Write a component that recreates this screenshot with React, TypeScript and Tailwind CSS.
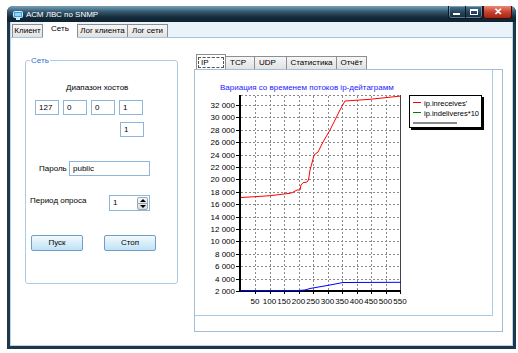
import React from "react";

const yOf = (v: number) => 291 - ((v - 2000) / 2000) * 12.4;
const xOf = (k: number) => 240.5 + k * 14.5;

const red: [number, number][] = [
  [241, 197.5], [255, 196.7], [270, 195.7], [290, 193.3], [292, 192.7], [297, 190], [300, 190],
  [301, 185], [303, 182.7], [307, 182], [308.5, 180], [310, 170], [312, 163], [314, 155],
  [318, 152], [323, 142], [330, 130], [340, 110], [345, 101], [370, 99.3], [401, 96],
];
const blue: [number, number][] = [
  [241, 290.5], [298, 290.5], [305, 290], [310, 288.5], [330, 285], [343, 282.5], [401, 282.3],
];

function Chart() {
  const yVals = Array.from({ length: 16 }, (_, i) => 2000 + i * 2000);
  const xs = Array.from({ length: 11 }, (_, i) => i + 1);
  const fmt = (v: number) => {
    const s = String(v);
    return s.length > 3 ? s.slice(0, s.length - 3) + " " + s.slice(-3) : s;
  };
  return (
    <svg width={297} height={245} viewBox="195 70 297 245" className="block">
      <text x={220} y={90} fontSize="8px" fill="#1a1aff" fontFamily="Liberation Sans, Arial, sans-serif">
        Вариация со временем потоков ip-дейтаграмм
      </text>
      {/* horizontal grid */}
      {yVals.slice(1).map((v) => {
        const y = Math.round(yOf(v)) + 0.5;
        return <line key={"h" + v} x1={241} x2={400} y1={y} y2={y} stroke="#8a8a8a" strokeDasharray="2 2" />;
      })}
      <line x1={241} x2={401} y1={95.5} y2={95.5} stroke="#8a8a8a" strokeDasharray="2 2" />
      {/* vertical grid */}
      {xs.slice(0, 10).map((k) => {
        const x = Math.round(xOf(k)) + 0.5;
        return <line key={"v" + k} x1={x} x2={x} y1={96} y2={290} stroke="#8a8a8a" strokeDasharray="2 2" />;
      })}
      <line x1={400.5} x2={400.5} y1={95} y2={292} stroke="#444" />
      {/* ticks */}
      {yVals.map((v) => {
        const y = Math.round(yOf(v)) + 0.5;
        return <line key={"yt" + v} x1={236} x2={240} y1={y} y2={y} stroke="#000" />;
      })}
      {xs.map((k) => {
        const x = Math.round(xOf(k)) + 0.5;
        return <line key={"xt" + k} x1={x} x2={x} y1={291} y2={294} stroke="#000" />;
      })}
      {/* axes */}
      <line x1={240} x2={240} y1={95} y2={292} stroke="#000" strokeWidth={2} />
      <line x1={239} x2={401} y1={291} y2={291} stroke="#000" strokeWidth={2} />
      {/* labels */}
      {yVals.map((v) => (
        <text key={"yl" + v} x={235} y={Math.round(yOf(v)) + 3} fontSize="8px" textAnchor="end" fill="#000" fontFamily="Liberation Sans, Arial, sans-serif">
          {fmt(v)}
        </text>
      ))}
      {xs.map((k) => (
        <text key={"xl" + k} x={xOf(k)} y={303.5} fontSize="8px" textAnchor="middle" fill="#000" fontFamily="Liberation Sans, Arial, sans-serif">
          {k * 50}
        </text>
      ))}
      {/* series */}
      <polyline points={blue.map((p) => p.join(",")).join(" ")} fill="none" stroke="#0000ff" strokeWidth={1} />
      <polyline points={red.map((p) => p.join(",")).join(" ")} fill="none" stroke="#ff0000" strokeWidth={1} />
      {/* legend */}
      <rect x={411} y={97} width={73} height={33} fill="#000" />
      <rect x={409.5} y={95.5} width={72} height={32} fill="#fff" stroke="#000" />
      <line x1={413} x2={421} y1={102.5} y2={102.5} stroke="#ff0000" />
      <text x={424} y={105.5} fontSize="7.5px" fill="#000" fontFamily="Liberation Sans, Arial, sans-serif">ip.inreceives'</text>
      <line x1={413} x2={421} y1={112.5} y2={112.5} stroke="#008000" />
      <text x={424} y={115.5} fontSize="7.5px" fill="#000" fontFamily="Liberation Sans, Arial, sans-serif">ip.indeliveres*10</text>
      <line x1={413} x2={457} y1={123} y2={123} stroke="#8a8a8a" strokeWidth={2} />
    </svg>
  );
}

function Box({ w, v, className = "" }: { w: number; v: string; className?: string }) {
  return (
    <div
      className={"h-[15px] border border-[#8fb6d9] bg-white pl-[3px] flex items-center " + className}
      style={{ width: w }}
    >
      {v}
    </div>
  );
}

function Btn({ label }: { label: string }) {
  return (
    <div className="w-[52px] h-[16px] rounded-[2px] border border-[#6f9fc6] bg-[linear-gradient(#f2f9fd,#d9eefa_50%,#bfe1f5)] flex items-center justify-center">
      {label}
    </div>
  );
}

export default function App() {
  return (
    <div className="w-[518px] h-[353px] bg-white overflow-hidden font-['Liberation_Sans',Arial,sans-serif] text-[8px] leading-[10px] text-black">
      <div className="ml-[7px] mt-[6px] w-[509px] h-[343px] flex flex-col rounded-t-[6px] bg-[#1d3848] px-[3px] pb-[3px]">
        {/* title bar */}
        <div className="h-[16px] -mx-[3px] pl-[6px] pr-[4px] flex items-start rounded-t-[6px] bg-[linear-gradient(#7aa3bb,#35596f_35%,#142b3a_70%,#0e2230)]">
          <div className="mt-[5px] w-[10px] h-[9px] flex items-center justify-center">
            <svg width="10" height="9" viewBox="0 0 10 9">
              <rect x="0.5" y="0.5" width="9" height="6" rx="1" fill="#3ba0d8" stroke="#cde9f8" />
              <rect x="2" y="2" width="6" height="3" fill="#8fd4f7" />
              <rect x="3" y="7" width="4" height="2" fill="#cde9f8" />
            </svg>
          </div>
          <div className="ml-[3px] mt-[4px] text-white text-[8px] leading-[10px]">АСМ ЛВС по SNMP</div>
          <div className="ml-auto flex">
            <div className="w-[35px] h-[13px] flex rounded-b-[3px] border border-t-0 border-[#0b1821] bg-[linear-gradient(#4d7894,#26465c_50%,#132c3c)] shadow-[inset_0_0_0_1px_rgba(160,200,225,0.5)]">
              <div className="w-[17px] h-full flex items-center justify-center border-r border-[#0b1821]">
                <div className="w-[7px] h-[2px] bg-white mt-[3px]" />
              </div>
              <div className="w-[17px] h-full flex items-center justify-center">
                <div className="w-[8px] h-[6px] border border-white border-t-2" />
              </div>
            </div>
            <div className="w-[29px] h-[13px] rounded-b-[3px] border border-t-0 border-[#3b0d08] bg-[linear-gradient(#e98a78,#c8412e_50%,#a52414)] flex items-center justify-center text-white font-bold text-[10px] leading-[10px]">
              ✕
            </div>
          </div>
        </div>
        {/* client */}
        <div className="flex-1 flex flex-col bg-white border-x border-b border-[#b8d4ea]">
          {/* main tab strip */}
          <div className="h-[16px] bg-[#eaf2fa] border-b border-[#a3c3de] flex items-end pl-[1px]">
            <div className="w-[31px] h-[13px] border border-b-0 border-[#8c8e94] bg-[linear-gradient(#f6f6f6,#e2e2e2)] flex items-center justify-center">Клиент</div>
            <div className="w-[34px] h-[16px] -mb-[1px] bg-white flex items-start justify-center pt-[2px]">Сеть</div>
            <div className="w-[51px] h-[13px] border border-b-0 border-[#8c8e94] bg-[linear-gradient(#f6f6f6,#e2e2e2)] flex items-center justify-center">Лог клиента</div>
            <div className="w-[40px] h-[13px] border border-b-0 border-l-0 border-[#8c8e94] bg-[linear-gradient(#f6f6f6,#e2e2e2)] flex items-center justify-center">Лог сети</div>
          </div>
          {/* page content */}
          <div className="flex-1 flex items-start">
            {/* group box */}
            <div className="relative ml-[14px] mt-[22px] w-[153px] h-[224px] rounded-[3px] border border-[#a9cde8] flex flex-col">
              <div className="absolute -top-[5px] left-[4px] px-[1px] bg-white text-[#2f73c8]">Сеть</div>
              <div className="mt-[22px] pl-[40px]">Диапазон хостов</div>
              <div className="mt-[7px] pl-[9px] flex gap-[4px]">
                <Box w={24} v="127" />
                <Box w={24} v="0" />
                <Box w={24} v="0" />
                <Box w={24} v="1" />
              </div>
              <div className="mt-[7px] pl-[94px] flex">
                <Box w={24} v="1" />
              </div>
              <div className="mt-[24px] flex items-center">
                <div className="pl-[13px] w-[43px]">Пароль</div>
                <Box w={81} v="public" />
              </div>
              <div className="mt-[19px] flex items-start">
                <div className="pl-[4px] w-[83px] mt-[1px]">Период опроса</div>
                <div className="w-[41px] h-[16px] border border-[#8fb6d9] bg-white flex items-center pl-[3px]">
                  <span className="flex-1">1</span>
                  <div className="w-[11px] h-[13px] mr-[1px] flex flex-col border border-[#9aa8b6] rounded-[2px] bg-[linear-gradient(#f4f6f8,#d5dde5)]">
                    <div className="flex-1 flex items-center justify-center border-b border-[#9aa8b6]">
                      <div className="w-0 h-0 border-x-[3px] border-x-transparent border-b-[3px] border-b-black" />
                    </div>
                    <div className="flex-1 flex items-center justify-center">
                      <div className="w-0 h-0 border-x-[3px] border-x-transparent border-t-[3px] border-t-black" />
                    </div>
                  </div>
                </div>
              </div>
              <div className="mt-[24px] pl-[5px] flex gap-[21px]">
                <Btn label="Пуск" />
                <Btn label="Стоп" />
              </div>
            </div>
            {/* right tab control */}
            <div className="ml-[16px] mt-[16px] w-[309px] flex flex-col">
              <div className="h-[15px] flex items-end pl-[2px]">
                <div className="w-[30px] h-[16px] -mb-[1px] border border-b-0 border-[#8c8e94] bg-white flex items-center justify-center">
                  <div className="w-[26px] h-[11px] border border-dashed border-[#555] flex items-center pl-[2px]">IP</div>
                </div>
                <div className="w-[29px] h-[13px] border border-b-0 border-l-0 border-[#8c8e94] bg-[linear-gradient(#f6f6f6,#e2e2e2)] flex items-center pl-[4px]">TCP</div>
                <div className="w-[32px] h-[13px] border border-b-0 border-l-0 border-[#8c8e94] bg-[linear-gradient(#f6f6f6,#e2e2e2)] flex items-center pl-[4px]">UDP</div>
                <div className="w-[50px] h-[13px] border border-b-0 border-l-0 border-[#8c8e94] bg-[linear-gradient(#f6f6f6,#e2e2e2)] flex items-center justify-center">Статистика</div>
                <div className="w-[30px] h-[13px] border border-b-0 border-l-0 border-[#8c8e94] bg-[linear-gradient(#f6f6f6,#e2e2e2)] flex items-center justify-center">Отчёт</div>
              </div>
              <div className="h-[263px] border border-[#a3bdd5] bg-white flex flex-col">
                <div className="w-[298px] h-[246px] border-r border-b border-[#a9cbe6]">
                  <Chart />
                </div>
              </div>
            </div>
          </div>
        </div>
      </div>
    </div>
  );
}
